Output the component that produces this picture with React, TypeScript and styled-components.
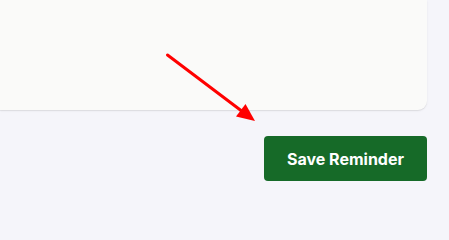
import styled, { createGlobalStyle } from "styled-components";

const GlobalStyle = createGlobalStyle`
    html, body {
        margin: 0;
        padding: 0;
        background: #f5f5fa;
        font-family: Inter, "Noto Sans", sans-serif;
    }
`;

const Page = styled.div`
    position: relative;
    width: 449px;
    height: 215px;
    display: flex;
    flex-direction: column;
    align-items: flex-end;
    padding-right: 22px;
    box-sizing: border-box;
    overflow: hidden;
`;

const Card = styled.div`
    align-self: stretch;
    height: 110px;
    background: #fafaf9;
    border-radius: 0 0 9px 0;
    box-shadow: 0 1px 1px rgba(0, 0, 0, 0.08), 0 1px 3px rgba(0, 0, 0, 0.04);
`;

const SaveButton = styled.button`
    margin-top: 26px;
    width: 163px;
    height: 45px;
    border: none;
    border-radius: 4px;
    background: #166a28;
    color: #ffffff;
    font-family: Inter, "Noto Sans", sans-serif;
    font-size: 16px;
    font-weight: 700;
    cursor: pointer;
`;

const Arrow = styled.svg`
    position: absolute;
    left: 0;
    top: 0;
    pointer-events: none;
`;

const App = () => (
    <>
        <GlobalStyle />
        <Page>
            <Card />
            <SaveButton>Save Reminder</SaveButton>
            <Arrow width="449" height="215" viewBox="0 0 449 215">
                <line
                    x1="167.5"
                    y1="55"
                    x2="243"
                    y2="112"
                    stroke="#ff0000"
                    strokeWidth="3"
                    strokeLinecap="round"
                />
                <polygon points="255,121 236,116.5 245.5,104" fill="#ff0000" />
            </Arrow>
        </Page>
    </>
);

export default App;
